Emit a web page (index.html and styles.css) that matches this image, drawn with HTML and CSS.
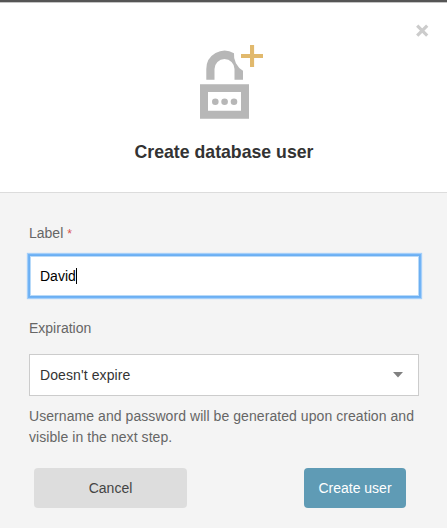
FILE: index.html
```html
<!DOCTYPE html>
<html lang="en">
<head>
<meta charset="utf-8">
<title>Create database user</title>
<link rel="stylesheet" href="styles.css">
</head>
<body>
<main class="dialog">
  <header class="dialog-header">
    <button class="close" type="button" aria-label="Close">
      <svg width="14" height="15" viewBox="0 0 14 15"><path d="M2.2 2.6 12.2 12.6M12.2 2.6 2.2 12.6"/></svg>
    </button>
    <svg class="lock" width="64" height="75" viewBox="0 0 64 75">
      <path class="lock-shape" fill-rule="evenodd" d="M0 40.3H49V74.7H0ZM8 48V66.8H41V48Z"/>
      <circle class="lock-shape" cx="15.3" cy="57.8" r="3.3"/>
      <circle class="lock-shape" cx="24.6" cy="57.8" r="3.3"/>
      <circle class="lock-shape" cx="34" cy="57.8" r="3.3"/>
      <path class="lock-shape" d="M6.3 35.7V25A18.3 18.3 0 0 1 34 9.2A18.3 18.3 0 0 0 43 26.8V35.7H34.5V25A10 10 0 0 0 14.5 25V35.7Z"/>
      <path class="plus" d="M50 1H54.1V9.9H63V14H54.1V23H50V14H41V9.9H50Z"/>
    </svg>
    <h1 class="title">Create database user</h1>
  </header>
  <form class="dialog-body">
    <label class="field-label">Label <span class="required">*</span></label>
    <div class="input"><span>David</span><i class="caret"></i></div>
    <label class="field-label expiration">Expiration</label>
    <div class="select">
      <span>Doesn't expire</span>
      <svg width="10" height="6" viewBox="0 0 10 6"><path d="M0 0H10L5 5.4Z"/></svg>
    </div>
    <p class="hint">Username and password will be generated upon creation and<br>visible in the next step.</p>
    <div class="actions">
      <button class="button cancel" type="button">Cancel</button>
      <button class="button create" type="button">Create user</button>
    </div>
  </form>
</main>
</body>
</html>
```
FILE: styles.css
```css
* {
  box-sizing: border-box;
}

body {
  margin: 0;
  background: #f4f4f4;
  font: 14px/20px "Liberation Sans", Arial, sans-serif;
  color: #666;
}

.dialog {
  height: 528px;
  overflow: hidden;
  border-top: 2px solid #555;
}

.dialog-header {
  position: relative;
  display: flex;
  flex-direction: column;
  height: 191px;
  padding-top: 42px;
  background: #fff;
  border-top: 1px solid #c4c4c4;
  border-bottom: 1px solid #dcdcdc;
}

.close {
  position: absolute;
  top: 20px;
  right: 18px;
  width: 14px;
  height: 15px;
  padding: 0;
  border: 0;
  background: none;
}

.close svg {
  display: block;
  fill: none;
  stroke: #ccc;
  stroke-width: 3.2;
}

.lock {
  display: block;
  flex: none;
  margin: -1px 0 0 200px;
}

.lock-shape {
  fill: #b7b7b7;
}

.plus {
  fill: #e1b96d;
}

.title {
  margin: 22px 0 0;
  padding-left: 1px;
  font-size: 17.7px;
  line-height: 22px;
  text-align: center;
  color: #333;
}

.dialog-body {
  padding: 30px 28px 0 29px;
}

.field-label {
  display: block;
}

.required {
  font-size: 12px;
  line-height: 1;
  color: #d9534f;
}

.input {
  display: flex;
  align-items: center;
  height: 42px;
  margin: 12px -1px 0 0;
  padding-left: 10px;
  background: #fff;
  color: #000;
  border: 1px solid #6caff2;
  box-shadow: 0 0 0 1px #72b4f6, 0 0 1px 2px #a5cff9, inset 0 0 0 1px #b8daf9;
}

.caret {
  width: 1px;
  height: 16px;
  background: #000;
}

.expiration {
  margin-top: 21px;
}

.select {
  display: flex;
  align-items: center;
  justify-content: space-between;
  height: 42px;
  margin-top: 16px;
  padding: 0 15px 0 10px;
  background: #fff;
  border: 1px solid #ccc;
  color: #333;
  letter-spacing: 0.1px;
}

.select svg {
  fill: #808080;
}

.hint {
  margin: 10px 0 0;
  line-height: 21px;
  letter-spacing: 0.065px;
  white-space: nowrap;
}

.actions {
  display: flex;
  justify-content: space-between;
  margin-top: 20px;
  padding: 0 13px 0 5px;
}

.button {
  height: 40px;
  padding: 0;
  border: 0;
  border-radius: 4px;
  font: inherit;
}

.cancel {
  width: 153px;
  background: #ddd;
  color: #444;
}

.create {
  width: 102px;
  background: #5f9bb5;
  color: #fff;
}
```
